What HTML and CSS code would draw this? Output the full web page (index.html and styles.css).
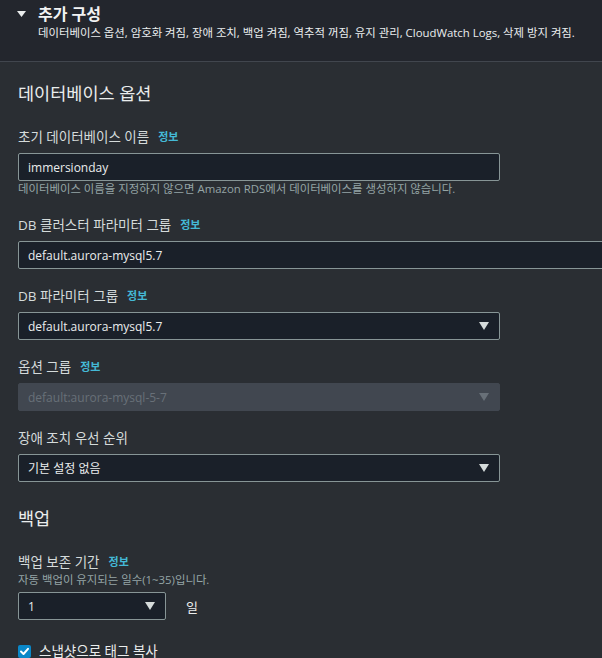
FILE: index.html
```html
<!DOCTYPE html>
<html lang="ko">
<head>
<meta charset="utf-8">
<link rel="stylesheet" href="styles.css">
</head>
<body>
<div class="page">
  <div class="header">
    <div class="title-row">
      <svg class="caret" width="9" height="7" viewBox="0 0 9 7"><polygon points="0,0 9,0 4.5,6" fill="#eaeded"/></svg>
      <span class="title">추가 구성</span>
    </div>
    <div class="subtitle">데이터베이스 옵션, 암호화 켜짐, 장애 조치, 백업 켜짐, 역추적 꺼짐, 유지 관리, CloudWatch Logs, 삭제 방지 켜짐.</div>
  </div>

  <div class="content">
    <div class="section">
      <h2 class="section-title">데이터베이스 옵션</h2>

      <div class="field first">
        <div class="label-row"><span class="label">초기 데이터베이스 이름</span><span class="info">정보</span></div>
        <div class="control input w-main">immersionday</div>
        <div class="hint">데이터베이스 이름을 지정하지 않으면 Amazon RDS에서 데이터베이스를 생성하지 않습니다.</div>
      </div>

      <div class="field after-hint">
        <div class="label-row"><span class="label">DB 클러스터 파라미터 그룹</span><span class="info">정보</span></div>
        <div class="control input w-wide">default.aurora-mysql5.7</div>
      </div>

      <div class="field">
        <div class="label-row"><span class="label">DB 파라미터 그룹</span><span class="info">정보</span></div>
        <div class="control select w-main"><span>default.aurora-mysql5.7</span>
          <svg class="arrow" width="10" height="8" viewBox="0 0 10 8"><polygon points="0,0 10,0 5,8" fill="#d5dbdb"/></svg>
        </div>
      </div>

      <div class="field">
        <div class="label-row"><span class="label">옵션 그룹</span><span class="info">정보</span></div>
        <div class="control select disabled w-main"><span>default:aurora-mysql-5-7</span>
          <svg class="arrow" width="10" height="8" viewBox="0 0 10 8"><polygon points="0,0 10,0 5,8" fill="#687078"/></svg>
        </div>
      </div>

      <div class="field">
        <div class="label-row"><span class="label">장애 조치 우선 순위</span></div>
        <div class="control select w-main"><span>기본 설정 없음</span>
          <svg class="arrow" width="10" height="8" viewBox="0 0 10 8"><polygon points="0,0 10,0 5,8" fill="#d5dbdb"/></svg>
        </div>
      </div>
    </div>

    <div class="section second">
      <h2 class="section-title">백업</h2>

      <div class="field first">
        <div class="label-row"><span class="label">백업 보존 기간</span><span class="info">정보</span></div>
        <div class="hint desc">자동 백업이 유지되는 일수(1~35)입니다.</div>
        <div class="inline-row">
          <div class="control select w-small"><span>1</span>
            <svg class="arrow" width="10" height="8" viewBox="0 0 10 8"><polygon points="0,0 10,0 5,8" fill="#d5dbdb"/></svg>
          </div>
          <span class="unit">일</span>
        </div>
      </div>

      <div class="check-row">
        <span class="checkbox">
          <svg width="13" height="13" viewBox="0 0 13 13"><polyline points="3,6.5 5.5,9 10,3.8" fill="none" stroke="#ffffff" stroke-width="2" stroke-linecap="round" stroke-linejoin="round"/></svg>
        </span>
        <span class="check-label">스냅샷으로 태그 복사</span>
      </div>
    </div>
  </div>
</div>
</body>
</html>
```

FILE: styles.css
```css
* { box-sizing: border-box; }
html, body {
  margin: 0;
  padding: 0;
  background: #2a2e33;
  overflow: hidden;
}
body {
  font-family: "Open Sans", "Noto Sans CJK KR", sans-serif;
  color: #d5dbdb;
  width: 602px;
  height: 658px;
}
.page { width: 602px; }

.header {
  height: 62px;
  background: #23262d;
  border-bottom: 1px solid #41464e;
  padding: 4px 0 0 17px;
}
.title-row {
  display: flex;
  align-items: center;
  height: 20px;
}
.caret { margin-right: 12px; margin-top: 1px; }
.title {
  font-size: 16px;
  font-weight: 700;
  color: #f2f3f3;
  line-height: 20px;
}
.subtitle {
  margin-top: 2px;
  padding-left: 21px;
  font-size: 11.4px;
  line-height: 14px;
  color: #eaeded;
  white-space: nowrap;
}

.content { padding: 19px 0 0 18px; }

.section-title {
  margin: 0;
  font-size: 17.5px;
  font-weight: 400;
  line-height: 24px;
  color: #eaeded;
}
.section.second { margin-top: 24px; }

.field { margin-top: 17px; }
.field.first { margin-top: 22px; }
.field.after-hint { margin-top: 18px; }

.label-row {
  display: flex;
  align-items: center;
  height: 20px;
  margin-bottom: 6px;
}
.label {
  font-size: 13.5px;
  line-height: 20px;
  color: #d5dbdb;
}
.info {
  margin-left: 9px;
  font-size: 11px;
  font-weight: 700;
  color: #44b9d6;
  line-height: 20px;
}

.control {
  height: 28px;
  display: flex;
  align-items: center;
  padding: 0 10px 0 9px;
  font-size: 12px;
  color: #eaeded;
  background: #1a2029;
  border: 1px solid #879596;
  border-radius: 2px;
  white-space: nowrap;
}
.w-main { width: 482px; }
.w-wide { width: 640px; border-radius: 2px 0 0 2px; }
.w-small { width: 148px; }
.select { justify-content: space-between; }
.select span { flex: 1; }
.arrow { flex: none; }
.disabled {
  background: #414750;
  border-color: #414750;
  color: #687078;
}

.hint {
  font-size: 11.4px;
  line-height: 16px;
  color: #95a5a6;
  white-space: nowrap;
}
.label-row + .hint.desc { margin-top: -6px; margin-bottom: 4px; }

.inline-row {
  display: flex;
  align-items: center;
}
.unit {
  margin-left: 20px;
  font-size: 13px;
  color: #eaeded;
}

.check-row {
  display: flex;
  align-items: center;
  margin-top: 23px;
  height: 16px;
}
.checkbox {
  width: 13px;
  height: 13px;
  border-radius: 2px;
  background: #0a87c8;
  display: flex;
  margin-right: 8px;
}
.check-label {
  font-size: 13.5px;
  line-height: 16px;
  color: #eaeded;
}
```
